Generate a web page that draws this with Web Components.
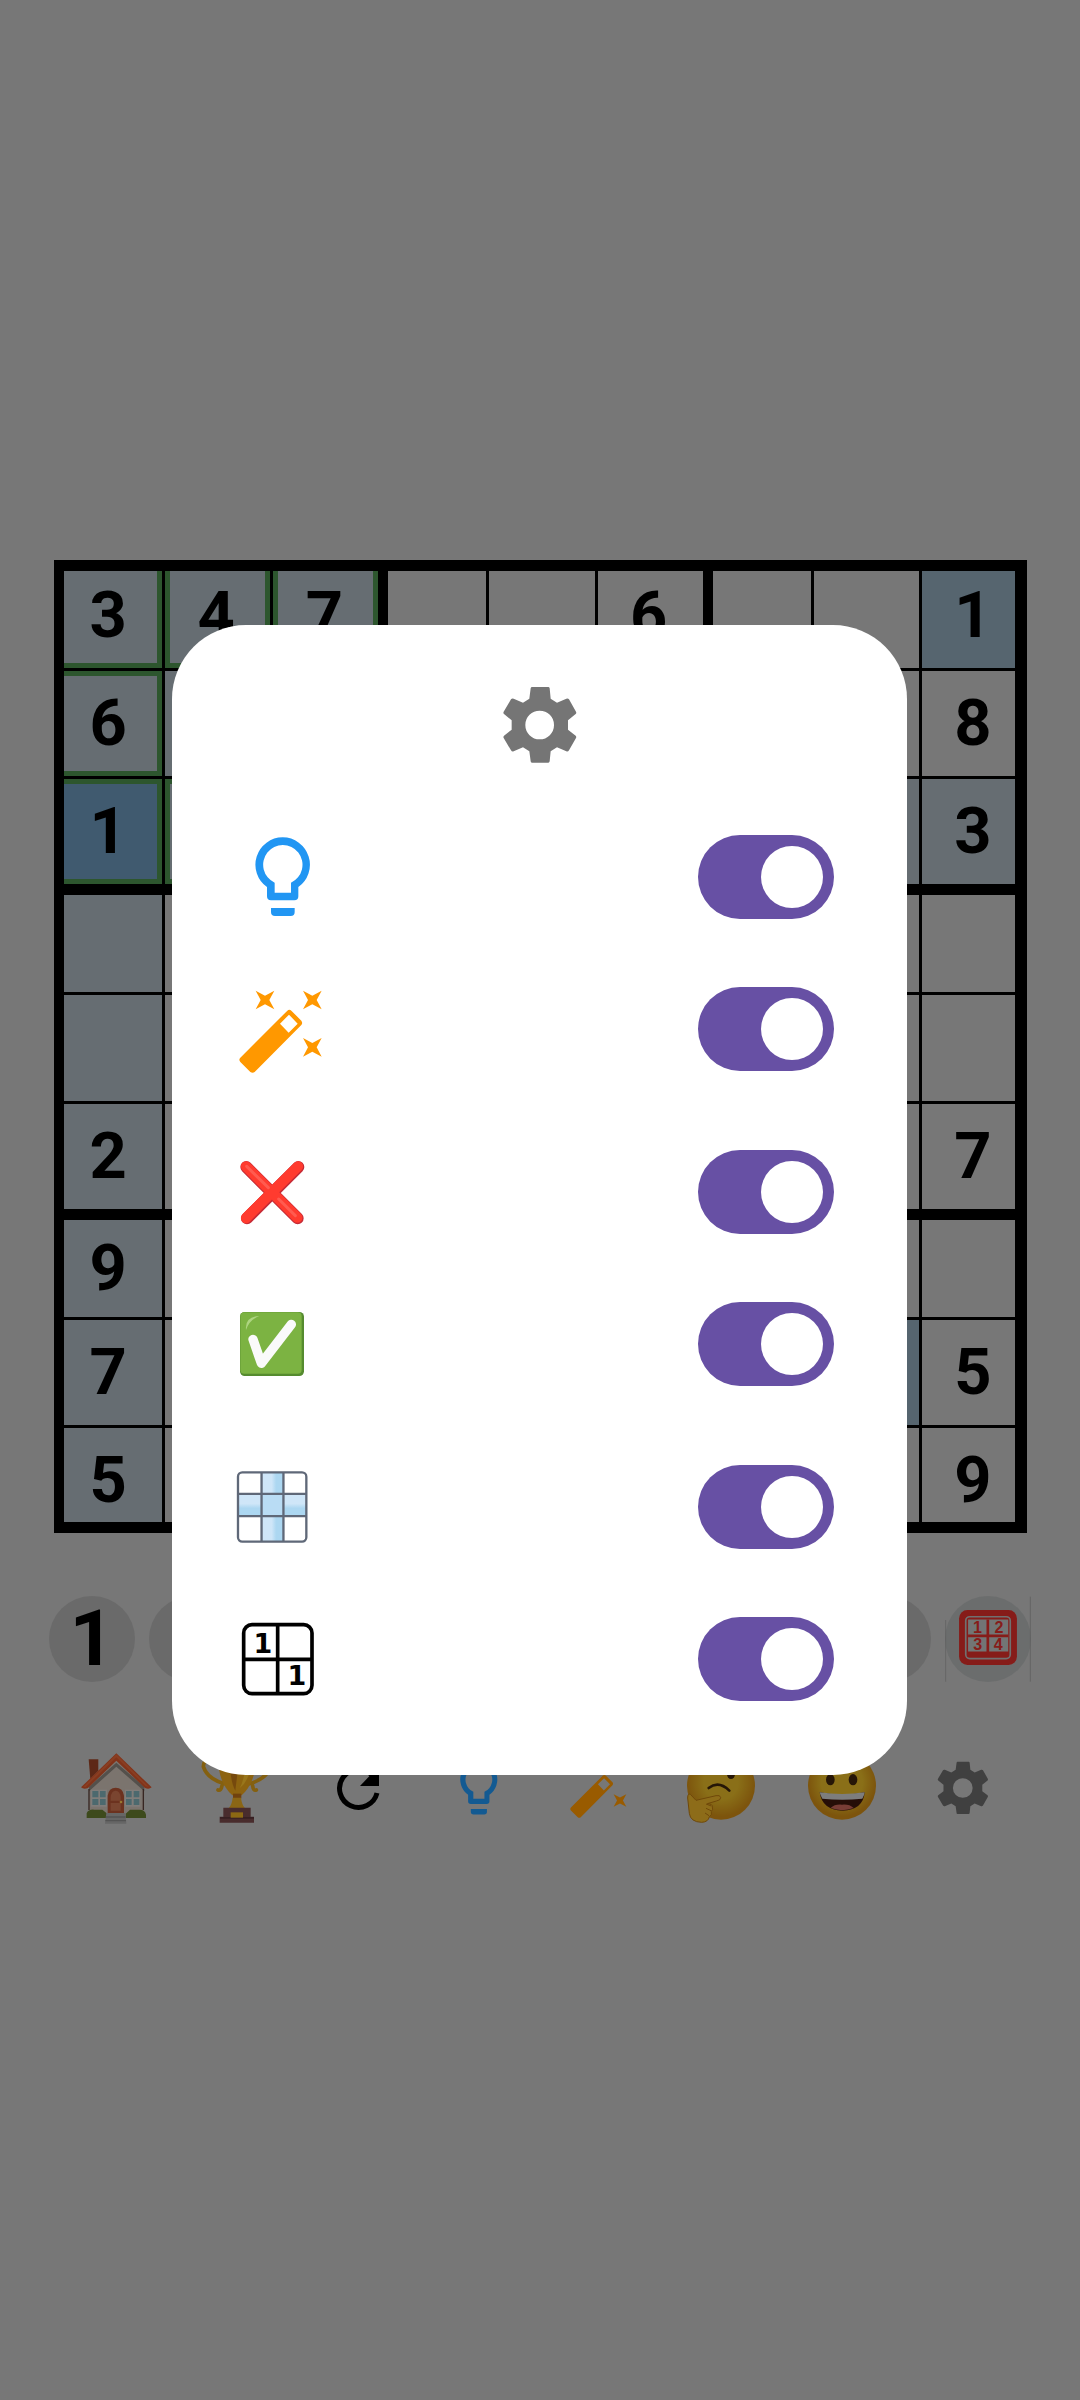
<!DOCTYPE html>
<html lang="en">
<head>
<meta charset="UTF-8">
<meta name="viewport" content="width=device-width, initial-scale=1">
<title>Sudoku</title>
<style>
    body {
        margin: 0;
        background: #c6c6c6;
        font-family: Roboto, "Liberation Sans", sans-serif;
    }
</style>
</head>
<body>
<sudoku-app>
    <sudoku-board></sudoku-board>
    <number-pad></number-pad>
    <game-toolbar></game-toolbar>
    <settings-dialog slot="dialog">
        <game-icon slot="header" name="gear" size="90"></game-icon>
        <setting-group>
            <setting-row label="Hint"><game-icon name="bulb" size="94"></game-icon></setting-row>
            <setting-row label="Auto fill"><game-icon name="wand" size="94"></game-icon></setting-row>
        </setting-group>
        <setting-group>
            <setting-row label="Show mistakes"><game-icon name="cross" size="72"></game-icon></setting-row>
            <setting-row label="Show correct"><game-icon name="check" size="72"></game-icon></setting-row>
        </setting-group>
        <setting-group>
            <setting-row label="Highlight row and column"><game-icon name="lines" size="72"></game-icon></setting-row>
            <setting-row label="Highlight same number"><game-icon name="same" size="84"></game-icon></setting-row>
        </setting-group>
    </settings-dialog>
</sudoku-app>

<script>
const spark = (x, y) => `<path d="M${x - 28} ${y - 28}L${x} ${y - 13}L${x + 28} ${y - 28}L${x + 13} ${y}L${x + 28} ${y + 28}L${x} ${y + 13}L${x - 28} ${y + 28}L${x - 13} ${y}Z"/>`;

const ICONS = {
    gear: {
        box: '76 59 270 270',
        body: `<path fill="currentColor" fill-rule="evenodd" d="M187 80H236Q239 80 240 84L243 115L262 127L290 115Q295 113 298 117L319 154Q321 158 318 161L295 180V208L318 226Q321 229 319 233L298 270Q295 275 290 273L262 261L243 273L240 303Q239 307 236 307H187Q183 307 183 303L179 273L160 261L132 273Q127 275 124 270L102 233Q100 229 103 226L126 208V180L103 161Q100 158 102 154L124 117Q127 113 132 115L160 127L179 115L183 84Q184 80 187 80ZM210 151A43 43 0 1 0 210 237A43 43 0 1 0 210 151Z"/>`
    },
    bulb: {
        box: '48 60 282 282',
        body: `<g fill="#2196f3"><path fill-rule="evenodd" d="M188 82A82 82 0 0 1 235 231V259Q235 271 223 271H153Q141 271 141 259V231A82 82 0 0 1 188 82ZM164 248V218A59 59 0 1 1 213 218V248Z"/><path d="M153 294H224V306Q224 318 212 318H165Q153 318 153 306Z"/></g>`
    },
    wand: {
        box: '48 516 282 282',
        body: `<g fill="#ff9800"><path fill-rule="evenodd" d="M202 602Q208 597 214 602L244 632Q249 639 244 645L104 786Q98 791 91 786L61 756Q55 749 61 743ZM207 614L180 641L206 668L233 641Z"/>${spark(135, 570)}${spark(277, 570)}${spark(277, 712)}</g>`
    },
    cross: {
        box: '48 78 216 216',
        body: `<g fill="none" stroke-linecap="round"><path d="M79 111L233 265M235 111L81 265" stroke="#c62b36" stroke-width="36"/><path d="M78 109L232 263M234 109L78 264" stroke="#ff3b2f" stroke-width="31"/><path d="M80 109L145 173M176 207L226 257" stroke="#ff5b50" stroke-width="9"/></g>`
    },
    check: {
        box: '48 534 216 216',
        body: `<rect x="60" y="546" width="192" height="192" rx="14" fill="#558b2f"/><rect x="61" y="547" width="184" height="184" rx="12" fill="#7cb342"/><path d="M78 600Q74 560 118 558Q88 570 78 600Z" fill="#aed581"/><path d="M99 628L124 700L214 583" fill="none" stroke="#fafafa" stroke-width="28" stroke-linecap="round" stroke-linejoin="round"/>`
    },
    lines: {
        box: '48 92 217 217',
        body: `<defs><linearGradient id="h"><stop offset=".45" stop-color="#cfe6f8"/><stop offset=".65" stop-color="#acd7f1"/></linearGradient><linearGradient id="v" x2="0" y2="1"><stop offset=".45" stop-color="#cfe6f8"/><stop offset=".65" stop-color="#acd7f1"/></linearGradient></defs>
            <path fill="url(#h)" d="M126 96H192V304H126Z"/><path fill="url(#v)" d="M54 160H125V228H54ZM193 160H260V228H193Z"/><path fill="#b9dcf4" d="M126 160H192V228H126Z"/>
            <g fill="none" stroke="#5f6878" stroke-width="7"><rect x="54" y="96" width="206" height="209" rx="13"/><path d="M125 96V305M191 96V305M54 161H260M54 228H260"/></g>`
    },
    same: {
        box: '48 531 252 252',
        body: `<g fill="none" stroke="#000" stroke-width="11"><rect x="71" y="554" width="205" height="207" rx="25"/><path d="M173 554V761M71 658H276"/></g>
            <g font-family="DejaVu Sans" font-weight="bold" font-size="81" text-anchor="middle"><text x="129" y="639">1</text><text x="231" y="734">1</text></g>`
    },
    house: {
        box: '150 541 222 222',
        body: `<path fill="#9c4427" d="M179 566H208V600L184 625Z"/><path fill="#cdc2b8" d="M262 568L346 645V738H180V645Z"/><path fill="#8c857e" d="M262 576L346 648V662L262 588L180 662V648Z"/>
            <path fill="#d9552b" d="M262 548L368 650Q360 657 348 652L262 570L177 652Q164 657 156 650Z"/><path fill="#e5683a" d="M262 551L163 648L170 649L262 560L350 646L360 649Z"/>
            <path fill="#ddd" opacity=".5" d="M186 657H234V708H186ZM288 657H334V708H288Z"/><g fill="#7fafb8"><path d="M190 661H208V680H190ZM213 661H230V680H213ZM190 685H208V703H190ZM213 685H230V703H213ZM291 661H308V680H291ZM314 661H331V680H314ZM291 685H308V703H291ZM314 685H331V703H314Z"/></g>
            <path d="M180 655V718M343 655V718" stroke="#5c4039" stroke-width="4"/>
            <path fill="#b55435" d="M236 727V675Q239 651 260 651Q282 651 285 675V727Z"/><path fill="#cc7350" d="M245 680Q247 660 260 660Q273 660 275 680V690H245ZM245 697H275V720H245Z"/><circle cx="276" cy="694" r="4" fill="#ffca50"/>
            <path fill="#667c2f" d="M173 742V728Q178 715 196 717H220L235 729V742ZM290 742V729L303 717H332Q348 717 351 732V742Z"/><path fill="#aaa" d="M232 727H289L292 759H228Z"/><path fill="#8b8b8b" d="M231 737H290V741H231ZM229 748H291V752H229Z"/>`
    },
    trophy: {
        box: '513 541 222 222',
        body: `<path fill="none" stroke="#dda01b" stroke-width="11" stroke-linecap="round" d="M579 572Q525 550 523 588Q535 626 590 640M579 645Q576 662 567 658M668 572Q723 550 725 588Q713 626 658 640M671 645Q673 662 682 658"/>
            <path fill="#eba51c" d="M567 560H681Q681 635 638 674H610Q567 635 567 560Z"/><path fill="#c57b17" d="M603 560H631L619 660Q602 630 603 560Z"/><path fill="#ffc52d" d="M650 560H669Q666 626 632 653Q650 620 650 560Z"/><path fill="#bd6e18" d="M612 669H637V683H612Z"/><path fill="#e8ab24" d="M611 681H636Q638 701 648 713H599Q609 701 611 681Z"/><path fill="#7b4a4c" d="M583 711H665V740H583ZM572 738H675V756H572Z"/><path fill="#5d3639" d="M573 739H675V744H573Z"/><path fill="#e9ad20" d="M605 725H642V741H605Z"/>`
    },
    refresh: {
        box: '0 0 64 64',
        body: `<path d="M51 37A19 19 0 1 1 46 19" fill="none" stroke="#000" stroke-width="5"/><path d="M53 10V30H34Z"/>`
    },
    think: {
        box: '432 541 222 222',
        body: `<defs><radialGradient id="f" cx=".5" cy=".45"><stop offset=".5" stop-color="#e6ba28"/><stop offset="1" stop-color="#d08d16"/></radialGradient></defs><circle cx="543" cy="645" r="102" fill="url(#f)"/><ellipse cx="573" cy="611" rx="12" ry="14" fill="#40260d"/><path d="M506 652Q536 629 568 660" fill="none" stroke="#40260d" stroke-width="8" stroke-linecap="round"/>
            <path fill="#ecb52a" stroke="#b97810" stroke-width="3" d="M443 682Q443 667 451 671L468 689L528 675Q541 672 542 681Q542 689 529 691L502 699Q519 700 517 709Q520 717 514 722Q517 733 508 738Q505 754 485 755Q451 754 448 728Z"/><path d="M498 700L514 706M498 713L513 720M495 727L507 735" stroke="#b97810" stroke-width="3"/>`
    },
    smile: {
        box: '795 541 222 222',
        body: `<defs><radialGradient id="s" cx=".5" cy=".45"><stop offset=".6" stop-color="#e6ba28"/><stop offset="1" stop-color="#d08d16"/></radialGradient></defs><circle cx="906" cy="645" r="102" fill="url(#s)"/><ellipse cx="871" cy="627" rx="13" ry="17" fill="#40260d"/><ellipse cx="939" cy="627" rx="13" ry="17" fill="#40260d"/>
            <path fill="#40180d" d="M839 665Q906 679 974 665Q970 718 907 720Q846 718 839 665Z"/><path fill="#d0d0d0" d="M839 665Q906 675 974 665Q973 675 967 684Q906 690 847 684Q841 675 839 665Z"/><path fill="#c86759" d="M872 712Q884 700 906 702Q928 700 941 712Q907 725 872 712Z"/>`
    },
    notes: {
        box: '1215 78 257 257',
        body: `<path d="M1217 150V334M1470 80V334" stroke="#999" stroke-width="2"/><rect x="1257" y="120" width="173" height="164" rx="25" fill="#df302b"/><rect x="1277" y="140" width="133" height="125" rx="12" fill="none" stroke="#bbb" stroke-width="5"/><path fill="#bfc3c3" d="M1284 148H1404V244H1284Z"/><path d="M1343 148V248M1284 197H1404" stroke="#df302b" stroke-width="8"/>
            <g fill="#df302b" font-family="Liberation Sans" font-weight="bold" font-size="48" text-anchor="middle"><text x="1312" y="188">1</text><text x="1376" y="188">2</text><text x="1313" y="239">3</text><text x="1374" y="239">4</text></g>`
    }
};

class GameIcon extends HTMLElement {
    constructor() {
        super();
        this.attachShadow({ mode: 'open' });
    }

    connectedCallback() {
        const icon = ICONS[this.getAttribute('name')];
        const size = this.getAttribute('size');
        this.shadowRoot.innerHTML = `
            <style>
                :host { display: block; flex: none; }
                svg { display: block; }
            </style>
            <svg width="${size}" height="${size}" viewBox="${icon.box}" aria-hidden="true">${icon.body}</svg>
        `;
    }
}

class SudokuApp extends HTMLElement {
    constructor() {
        super();
        this.attachShadow({ mode: 'open' });
        this.shadowRoot.innerHTML = `
            <style>
                :host { display: block; }
                main {
                    box-sizing: border-box;
                    min-height: 100vh;
                    display: flex;
                    flex-direction: column;
                    justify-content: center;
                }
            </style>
            <main><slot></slot></main>
            <slot name="dialog"></slot>
        `;
    }
}

const BOARD = [
    '347..6..1',
    '6.......8',
    '1.......3',
    '.........',
    '.........',
    '2.......7',
    '9........',
    '7.......5',
    '5.......9'
];
const SOLVED = ['0,0', '0,1', '0,2', '1,0', '2,0', '2,1'];
const SAME = ['0,8', '7,7'];

class SudokuBoard extends HTMLElement {
    constructor() {
        super();
        this.attachShadow({ mode: 'open' });
    }

    connectedCallback() {
        this.render();
    }

    cellClass(row, col) {
        const key = `${row},${col}`;
        const names = [];
        if (row === 2 && col === 0) names.push('selected');
        else if (SAME.includes(key)) names.push('same');
        else if (row === 2 || col === 0 || (row < 3 && col < 3)) names.push('peer');
        if (SOLVED.includes(key)) names.push('solved');
        if (col % 3 === 0) names.push('thick-left');
        if (row % 3 === 0) names.push('thick-top');
        if (row === 6) names.push('low');
        if (col === 8) names.push('last-col');
        if (row === 8) names.push('last-row');
        return names.join(' ');
    }

    render() {
        let cells = '';
        BOARD.forEach((line, row) => {
            [...line].forEach((digit, col) => {
                const label = `Row ${row + 1}, column ${col + 1}`;
                cells += `<button class="${this.cellClass(row, col)}" aria-label="${label}">${digit === '.' ? '' : digit}</button>`;
            });
        });

        this.shadowRoot.innerHTML = `
            <style>
                :host {
                    display: grid;
                    grid-template-columns: repeat(9, 1fr);
                    margin: 0 53px 0 54px;
                }
                button {
                    --left: 3px;
                    --top: 3px;
                    --right: 0px;
                    --bottom: 0px;
                    --ring: transparent;
                    box-sizing: border-box;
                    aspect-ratio: 1;
                    min-width: 0;
                    padding: 3px 0 0;
                    border: 0;
                    background: none;
                    color: #000;
                    font: bold 65px/1 Roboto, "Liberation Sans", sans-serif;
                    box-shadow:
                        inset var(--left) var(--top) #000,
                        inset calc(0px - var(--right)) calc(0px - var(--bottom)) #000,
                        inset 8px 8px var(--ring),
                        inset -5px -5px var(--ring);
                }
                .peer { background: #aab6be; }
                .same { background: #90a8ba; }
                .selected { background: #6b97b9; }
                .solved { --ring: #4b8f4e; }
                .thick-left { --left: 10px; }
                .thick-top { --top: 11px; }
                .last-col { --right: 12px; }
                .last-row { --bottom: 11px; }
                .low { padding-top: 11px; }
            </style>
            ${cells}
        `;
    }
}

class NumberPad extends HTMLElement {
    constructor() {
        super();
        this.attachShadow({ mode: 'open' });
        const keys = [1, 2, 3, 4, 5, 6, 7, 8, 9]
            .map(n => `<button aria-label="Number ${n}">${n === 1 ? n : ''}</button>`)
            .join('');
        this.shadowRoot.innerHTML = `
            <style>
                :host {
                    display: flex;
                    justify-content: space-between;
                    margin: 63px 49px 0;
                }
                button {
                    width: 86px;
                    height: 86px;
                    padding: 0;
                    border: 0;
                    border-radius: 50%;
                    background: #b1b1b1;
                    color: #000;
                    font: bold 78px/1 Roboto, "Liberation Sans", sans-serif;
                }
                .notes { background: #b3b6b6; }
            </style>
            ${keys}
            <button class="notes" aria-label="Notes"><game-icon name="notes" size="86"></game-icon></button>
        `;
    }
}

class GameToolbar extends HTMLElement {
    constructor() {
        super();
        this.attachShadow({ mode: 'open' });
        const items = [
            ['house', 74, 'Home'],
            ['trophy', 74, 'Records'],
            ['refresh', 64, 'Restart'],
            ['bulb', 64, 'Hint'],
            ['wand', 64, 'Auto fill'],
            ['think', 74, 'Think'],
            ['smile', 74, 'Mood'],
            ['gear', 62, 'Settings']
        ];
        this.shadowRoot.innerHTML = `
            <style>
                :host {
                    display: grid;
                    grid-template-columns: repeat(8, 1fr);
                    margin: 54px 57px 0 56px;
                }
                button {
                    height: 104px;
                    padding: 0;
                    border: 0;
                    background: none;
                    color: #6c6c6c;
                    display: flex;
                    align-items: center;
                    justify-content: center;
                }
            </style>
            ${items.map(([name, size, label]) => `<button aria-label="${label}"><game-icon name="${name}" size="${size}"></game-icon></button>`).join('')}
        `;
    }
}

class SettingsDialog extends HTMLElement {
    constructor() {
        super();
        this.attachShadow({ mode: 'open' });
        this.shadowRoot.innerHTML = `
            <style>
                :host {
                    position: fixed;
                    inset: 0;
                    padding-right: 1px;
                    display: flex;
                    align-items: center;
                    justify-content: center;
                    background: rgba(0, 0, 0, 0.4);
                }
                section {
                    box-sizing: border-box;
                    width: 735px;
                    max-width: 90vw;
                    padding: 55px 73px 74px 64px;
                    border-radius: 74px;
                    background: #fff;
                    display: flex;
                    flex-direction: column;
                    gap: 79px;
                }
                header {
                    display: flex;
                    justify-content: center;
                    margin: 0 0 -14px 9px;
                    color: #757575;
                }
            </style>
            <section role="dialog" aria-label="Settings">
                <header><slot name="header"></slot></header>
                <slot></slot>
            </section>
        `;
    }
}

class SettingGroup extends HTMLElement {
    constructor() {
        super();
        this.attachShadow({ mode: 'open' });
        this.shadowRoot.innerHTML = `
            <style>
                :host {
                    display: flex;
                    flex-direction: column;
                    gap: 68px;
                }
            </style>
            <slot></slot>
        `;
    }
}

class SettingRow extends HTMLElement {
    constructor() {
        super();
        this.attachShadow({ mode: 'open' });
        this.shadowRoot.innerHTML = `
            <style>
                :host { display: block; }
                label {
                    height: 84px;
                    display: flex;
                    align-items: center;
                    justify-content: space-between;
                }
                input {
                    appearance: none;
                    box-sizing: border-box;
                    width: 136px;
                    height: 84px;
                    margin: 0;
                    padding: 11px;
                    border-radius: 42px;
                    background: #cac4d0;
                    display: flex;
                }
                input::before {
                    content: "";
                    width: 62px;
                    height: 62px;
                    border-radius: 50%;
                    background: #fff;
                }
                input:checked {
                    background: #6750a4;
                    justify-content: flex-end;
                }
            </style>
            <label>
                <slot></slot>
                <input type="checkbox" role="switch" aria-label="${this.getAttribute('label')}" checked>
            </label>
        `;
    }
}

customElements.define('game-icon', GameIcon);
customElements.define('sudoku-app', SudokuApp);
customElements.define('sudoku-board', SudokuBoard);
customElements.define('number-pad', NumberPad);
customElements.define('game-toolbar', GameToolbar);
customElements.define('settings-dialog', SettingsDialog);
customElements.define('setting-group', SettingGroup);
customElements.define('setting-row', SettingRow);
</script>
</body>
</html>
